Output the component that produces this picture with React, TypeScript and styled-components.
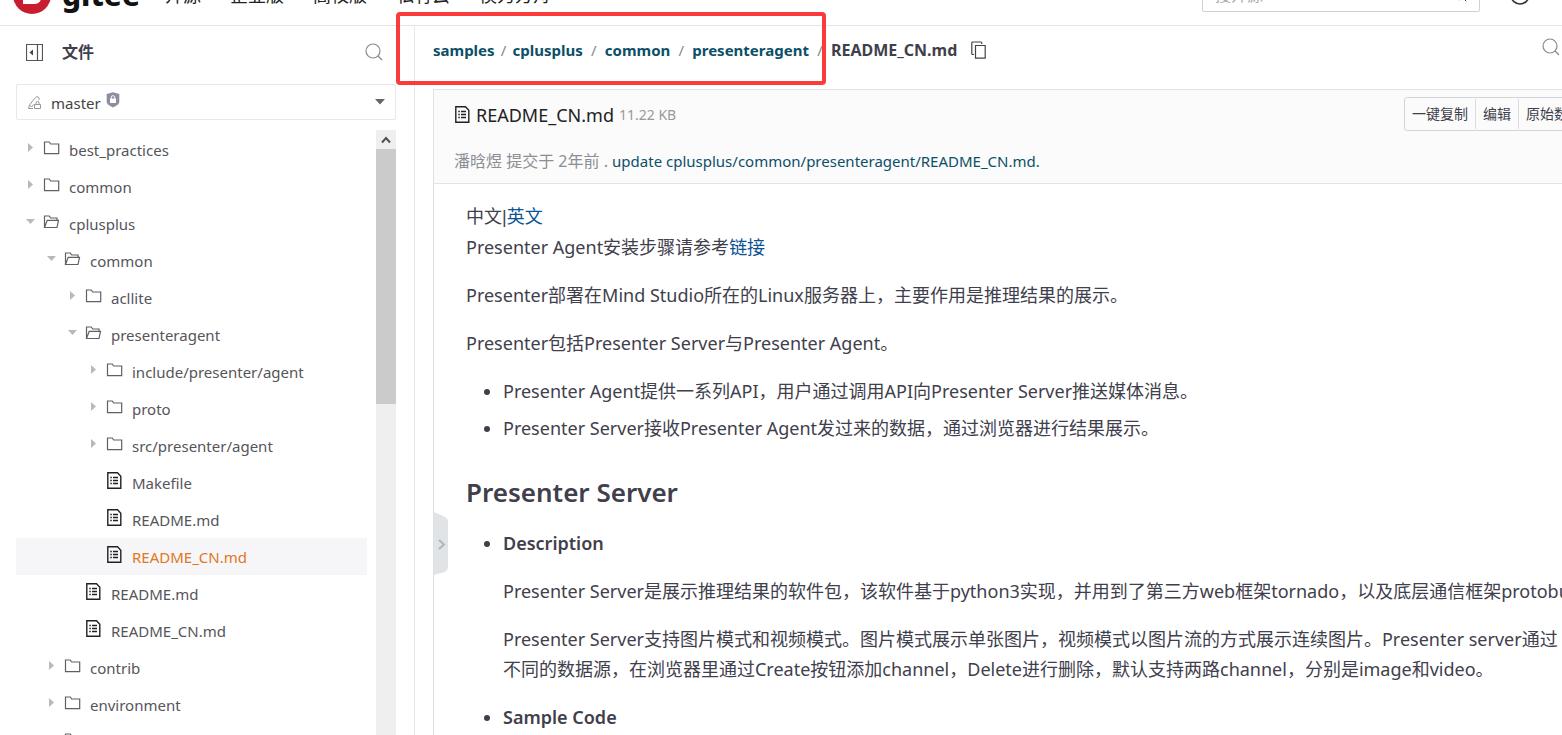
import React from 'react';
import styled, { createGlobalStyle, css } from 'styled-components';

const GlobalStyle = createGlobalStyle`
  *, *::before, *::after { box-sizing: border-box; }
  body {
    margin: 0;
    background: #fff;
    color: #40404c;
    font-family: 'Noto Sans', 'Noto Sans CJK SC', sans-serif;
    font-size: 16px;
    overflow: hidden;
  }
  a { color: inherit; text-decoration: none; }
  button, select, input { font: inherit; color: inherit; background: none; border: 0; padding: 0; margin: 0; }
  button { cursor: pointer; }
  svg { display: block; flex: none; }
`;

const Page = styled.div`
  position: relative;
  display: flex;
  flex-direction: column;
  height: 100vh;
  overflow: hidden;
`;

const TopBar = styled.header`
  display: flex;
  align-items: center;
  flex: none;
  height: 62px;
  margin-top: -36px;
  padding: 0 32px 0 12px;
  border-bottom: 1px solid #e3e3e5;
`;

const Brand = styled.a`
  display: flex;
  align-items: center;
  gap: 10px;
  width: 153px;
  color: #111;
  font-size: 30px;
  font-weight: 800;
  line-height: 40px;
`;

const Nav = styled.nav`
  display: flex;
  gap: 29px;
  color: #222;
  font-size: 18px;
  line-height: 26px;
  white-space: nowrap;
`;

const SearchField = styled.label`
  display: flex;
  align-items: center;
  width: 278px;
  height: 34px;
  margin-left: auto;
  padding: 0 12px;
  border: 1px solid #d0d0d4;
  border-radius: 2px;
  color: #333;
`;

const SearchInput = styled.input`
  flex: 1;
  min-width: 0;
  font-size: 16px;
  outline: 0;
  &::placeholder { color: #aaa; opacity: 1; }
`;

const HelpButton = styled.button`
  margin-left: 30px;
`;

const Columns = styled.div`
  display: flex;
  flex: 1;
  min-height: 0;
`;

const Sidebar = styled.aside`
  display: flex;
  flex-direction: column;
  flex: none;
  width: 415px;
  padding-left: 16px;
  border-right: 1px solid #e8e8ec;
`;

const SidebarHead = styled.div`
  display: flex;
  align-items: center;
  gap: 19px;
  height: 58px;
  padding: 0 31px 6px 10px;
`;

const SidebarTitle = styled.h2`
  flex: 1;
  margin: 0;
  font-size: 16px;
  line-height: 24px;
`;

const BranchBox = styled.div`
  display: flex;
  align-items: center;
  height: 36px;
  margin-right: 18px;
  padding: 0 10px;
  border: 1px solid #e8e8ea;
  border-radius: 2px;
  color: #444;
`;

const BranchSelect = styled.select`
  appearance: none;
  margin: 2px 5px 0 9px;
  font-size: 15px;
`;

const BranchBadge = styled.span`
  flex: 1;
  padding-bottom: 4px;
`;

const TreeArea = styled.div`
  display: flex;
  flex: 1;
  gap: 9px;
  min-height: 0;
  margin: 10px 18px 0 0;
`;

const Tree = styled.ul`
  flex: 1;
  margin: 0;
  padding: 1px 0 0;
  overflow: hidden;
  list-style: none;
`;

const rowStyles = css<{ $depth: number }>`
  display: flex;
  align-items: center;
  width: 100%;
  height: 37px;
  padding-left: ${({ $depth }) => 10 + $depth * 21}px;
  color: #55555a;
  font-size: 15px;
  line-height: 36px;
  text-align: left;
  svg { margin-bottom: 4px; }
`;

const FolderRow = styled.button<{ $depth: number }>`
  ${rowStyles}
`;

const FileRow = styled.a<{ $depth: number; $active?: boolean }>`
  ${rowStyles}
  ${({ $active }) => $active && css`
    background: #f6f6f9;
    color: #e2771c;
  `}
`;

const ArrowSlot = styled.span`
  display: flex;
  width: 17px;
`;

const RowLabel = styled.span`
  margin-left: 9px;
  white-space: nowrap;
`;

const ScrollTrack = styled.div`
  display: flex;
  flex-direction: column;
  width: 20px;
  background: #efefef;
`;

const ScrollUp = styled.button`
  display: flex;
  align-items: center;
  justify-content: center;
  height: 19px;
`;

const ScrollThumb = styled.div`
  height: 255px;
  background: #cbcbcb;
`;

const Main = styled.main`
  display: flex;
  flex-direction: column;
  flex: 1;
  min-width: 0;
  padding-left: 18px;
`;

const PathBar = styled.div`
  display: flex;
  align-items: center;
  flex: none;
  height: 63px;
  padding-bottom: 15px;
`;

const Crumbs = styled.nav`
  display: flex;
  margin-right: 14px;
  color: #888;
  font-size: 15px;
  line-height: 24px;
  white-space: nowrap;
`;

const Crumb = styled.a`
  color: #0b4f68;
  font-weight: 700;
`;

const CurrentCrumb = styled.span`
  color: #40404c;
  font-size: 16px;
  font-weight: 700;
`;

const Slash = styled.span<{ $tight: boolean }>`
  width: ${({ $tight }) => ($tight ? 18 : 22)}px;
  text-align: center;
`;

const PathSearch = styled.button`
  margin: 0 2px 6px auto;
`;

const FilePanel = styled.section`
  position: relative;
  flex: 1;
  min-height: 0;
  margin-right: -36px;
  border: solid #dfe1e5;
  border-width: 1px 0 0 1px;
`;

const FileHead = styled.div`
  height: 94px;
  padding: 7px 8px 0 20px;
  border-bottom: 1px solid #e3e3e5;
  background: #fbfbfb;
`;

const FileTitleRow = styled.div`
  display: flex;
  align-items: center;
  height: 34px;
`;

const FileName = styled.span`
  margin: 2px 5px 0;
  color: #222;
  font-size: 18px;
  line-height: 28px;
`;

const FileSize = styled.span`
  margin-top: 2px;
  color: #999;
  font-size: 14px;
  line-height: 24px;
`;

const Actions = styled.div`
  display: flex;
  align-items: center;
  height: 34px;
  margin-left: auto;
  border: 1px solid #d3d4da;
  border-radius: 3px;
`;

const Action = styled.button`
  height: 30px;
  padding: 0 7px;
  font-size: 14px;
  line-height: 28px;
  white-space: nowrap;
  & + & { border-left: 1px solid #dcdde2; }
`;

const CommitLine = styled.p`
  margin: 18px 0 0;
  color: #8d8d94;
  font-size: 16px;
  line-height: 24px;
  white-space: nowrap;
`;

const CommitLink = styled.a`
  color: #0b5069;
  font-size: 15px;
`;

const Article = styled.article`
  padding: 17px 0 0 32px;
  font-size: 18px;
  line-height: 30px;
  white-space: nowrap;
`;

const Paragraph = styled.p`
  margin: 0 0 18px;
`;

const Bar = styled.span`
  font-family: 'Liberation Sans', sans-serif;
`;

const BlueLink = styled.a`
  color: #0b5394;
`;

const Bullets = styled.ul<{ $gap: number }>`
  display: flex;
  flex-direction: column;
  gap: ${({ $gap }) => $gap}px;
  margin: 0;
  padding-left: 37px;
`;

const Heading = styled.h2`
  margin: 31px 0 18px;
  font-size: 26px;
  font-weight: 600;
  line-height: 36px;
`;

const Term = styled.p`
  margin: 0 0 18px;
  font-weight: 600;
`;

const PanelHandle = styled.button`
  position: absolute;
  top: 422px;
  left: 0;
`;

const Highlight = styled.div`
  position: absolute;
  top: 12px;
  left: 396px;
  width: 430px;
  height: 73px;
  border: 4px solid #fb3a3a;
  border-radius: 4px;
  pointer-events: none;
`;

const GiteeMark = () => (
  <svg width="40" height="40" viewBox="0 0 40 40" aria-hidden="true">
    <circle cx="20" cy="20" r="19" fill="#c71d2e" />
    <path d="M29 11H18a7 7 0 0 0-7 7v11h12a6 6 0 0 0 6-6v-5H18v4h6v1a2 2 0 0 1-2 2h-7v-7a3 3 0 0 1 3-3h11z" fill="#fff" />
  </svg>
);

const SearchIcon = ({ size = 18, color = '#8a8a8e' }: { size?: number; color?: string }) => (
  <svg width={size} height={size} viewBox="0 0 18 18" fill="none" stroke={color} strokeWidth="1.2" aria-hidden="true">
    <circle cx="8" cy="8" r="7" />
    <path d="M13 13l4 4" />
  </svg>
);

const HelpIcon = () => (
  <svg width="20" height="20" viewBox="0 0 20 20" fill="none" stroke="#333" strokeWidth="1.6" aria-hidden="true">
    <circle cx="10" cy="10" r="9" />
    <path d="M7.5 7.5a2.5 2.5 0 1 1 2.5 3v1.5" />
  </svg>
);

const CollapseIcon = () => (
  <svg width="17" height="17" viewBox="0 0 17 17" aria-hidden="true">
    <path d="M.5.5h16v16H.5zM11.5.5v16" fill="none" stroke="#555" strokeWidth="1.2" />
    <path d="M7 5.5v6l-3.500-3z" fill="#444" />
  </svg>
);

const BranchIcon = () => (
  <svg width="15" height="15" viewBox="0 0 15 15" fill="none" stroke="#98989c" aria-hidden="true">
    <path d="M6 13.500H1.500l1-3.500 6-7.500q1.500-1.500 2.800-.5t.7 2.500l-.5.800M2.500 10l2 2 2-2.500" />
    <path d="M7.500 9.500h6v4h-6zM9 9.500V8a1.500 1.500 0 0 1 3 0v1.500" />
  </svg>
);

const ShieldIcon = () => (
  <svg width="14" height="16" viewBox="0 0 14 16" aria-hidden="true">
    <path d="M7 .3l6.300 1.700v8q0 2.500-6.300 5.500-6.300-3-6.300-5.500V2z" fill="#8c8ea0" />
    <path d="M4 6.500h6v4.500H4z" fill="#fff" />
    <path d="M5.200 7V5.500a1.800 1.800 0 0 1 3.600 0V7" fill="none" stroke="#fff" />
  </svg>
);

const CaretIcon = () => (
  <svg width="10" height="6" viewBox="0 0 10 6" aria-hidden="true">
    <path d="M0 0h10L5 5.500z" fill="#666" />
  </svg>
);

const RowArrow = ({ open }: { open?: boolean }) => (
  <svg width="9" height="9" viewBox="0 0 9 9" aria-hidden="true">
    <path d={open ? 'M0 2h9L4.500 7z' : 'M2 0v9l5-4.500z'} fill="#b9b9bc" />
  </svg>
);

const FolderIcon = ({ open }: { open?: boolean }) => (
  <svg width="17" height="14" viewBox="0 0 17 14" fill="none" stroke="#606064" strokeWidth="1.200" aria-hidden="true">
    {open ? (
      <path d="M1.500 12.500V1h4.700l1.500 2h6.300v2M1.500 12.500L4.200 5.300h11.300l-1.500 7.200z" />
    ) : (
      <path d="M1.500 1h4.700l1.500 2h8v9.700H1.500z" />
    )}
  </svg>
);

const FileIcon = () => (
  <svg width="17" height="17" viewBox="0 0 17 17" fill="none" stroke="#222" strokeWidth="1.400" aria-hidden="true">
    <path d="M1.800.8h9.700l3.300 3.400v12H1.800z" />
    <path d="M4.300 5.500h1.500M7 5.500h5M4.300 8.500h1.500M7 8.500h5M4.300 11.500h1.500M7 11.500h5" />
  </svg>
);

const CopyIcon = () => (
  <svg width="15" height="18" viewBox="0 0 15 18" fill="none" stroke="#4a4040" strokeWidth="1.200" aria-hidden="true">
    <path d="M4.500 4.500h9.700v12.700H4.500z" />
    <path d="M3 13.500H1.800q-1 0-1-1v-10.500q0-1 1-1h8q1 0 1 1V3" />
  </svg>
);

const ChevronUp = () => (
  <svg width="10" height="8" viewBox="0 0 10 8" fill="none" stroke="#505050" strokeWidth="2" aria-hidden="true">
    <path d="M1 6.500l4-4.500 4 4.500" />
  </svg>
);

const HandleShape = () => (
  <svg width="14" height="64" viewBox="0 0 14 64" aria-hidden="true">
    <path d="M0 0l11 5q3 2 3 4v46q0 3-3 5L0 63z" fill="#e0e4e6" />
    <path d="M5 28l5 4.500-5 4.500" fill="none" stroke="#b0b4bc" strokeWidth="2" />
  </svg>
);

type Entry = { name: string; depth: number; kind: 'closed' | 'open' | 'file'; active?: boolean };

const entries: Entry[] = [
  { name: 'best_practices', depth: 0, kind: 'closed' },
  { name: 'common', depth: 0, kind: 'closed' },
  { name: 'cplusplus', depth: 0, kind: 'open' },
  { name: 'common', depth: 1, kind: 'open' },
  { name: 'acllite', depth: 2, kind: 'closed' },
  { name: 'presenteragent', depth: 2, kind: 'open' },
  { name: 'include/presenter/agent', depth: 3, kind: 'closed' },
  { name: 'proto', depth: 3, kind: 'closed' },
  { name: 'src/presenter/agent', depth: 3, kind: 'closed' },
  { name: 'Makefile', depth: 3, kind: 'file' },
  { name: 'README.md', depth: 3, kind: 'file' },
  { name: 'README_CN.md', depth: 3, kind: 'file', active: true },
  { name: 'README.md', depth: 2, kind: 'file' },
  { name: 'README_CN.md', depth: 2, kind: 'file' },
  { name: 'contrib', depth: 1, kind: 'closed' },
  { name: 'environment', depth: 1, kind: 'closed' },
  { name: 'level1_single_api', depth: 1, kind: 'closed' },
];

const navItems = ['开源', '企业版', '高校版', '私有云', '模力方舟'];
const crumbs = ['samples', 'cplusplus', 'common', 'presenteragent'];

const TreeEntry = ({ name, depth, kind, active }: Entry) => (
  <li>
    {kind === 'file' ? (
      <FileRow href="#" $depth={depth} $active={active}>
        <ArrowSlot />
        <FileIcon />
        <RowLabel>{name}</RowLabel>
      </FileRow>
    ) : (
      <FolderRow $depth={depth} aria-expanded={kind === 'open'}>
        <ArrowSlot><RowArrow open={kind === 'open'} /></ArrowSlot>
        <FolderIcon open={kind === 'open'} />
        <RowLabel>{name}</RowLabel>
      </FolderRow>
    )}
  </li>
);

export default function App() {
  return (
    <Page>
      <GlobalStyle />
      <TopBar>
        <Brand href="#"><GiteeMark />gitee</Brand>
        <Nav>{navItems.map((item) => <a href="#" key={item}>{item}</a>)}</Nav>
        <SearchField>
          <SearchInput placeholder="搜开源" aria-label="搜开源" />
          <SearchIcon size={14} color="#333" />
        </SearchField>
        <HelpButton aria-label="帮助"><HelpIcon /></HelpButton>
      </TopBar>
      <Columns>
        <Sidebar>
          <SidebarHead>
            <button aria-label="收起"><CollapseIcon /></button>
            <SidebarTitle>文件</SidebarTitle>
            <button aria-label="搜索文件"><SearchIcon /></button>
          </SidebarHead>
          <BranchBox>
            <BranchIcon />
            <BranchSelect aria-label="分支"><option>master</option></BranchSelect>
            <BranchBadge><ShieldIcon /></BranchBadge>
            <CaretIcon />
          </BranchBox>
          <TreeArea>
            <Tree>{entries.map((entry, i) => <TreeEntry key={i} {...entry} />)}</Tree>
            <ScrollTrack>
              <ScrollUp aria-label="向上滚动"><ChevronUp /></ScrollUp>
              <ScrollThumb />
            </ScrollTrack>
          </TreeArea>
        </Sidebar>
        <Main>
          <PathBar>
            <Crumbs>
              {crumbs.map((crumb, i) => (
                <React.Fragment key={crumb}>
                  <Crumb href="#">{crumb}</Crumb>
                  <Slash $tight={i === 0}>/</Slash>
                </React.Fragment>
              ))}
              <CurrentCrumb>README_CN.md</CurrentCrumb>
            </Crumbs>
            <button aria-label="复制路径"><CopyIcon /></button>
            <PathSearch aria-label="搜索"><SearchIcon /></PathSearch>
          </PathBar>
          <FilePanel>
            <FileHead>
              <FileTitleRow>
                <FileIcon />
                <FileName>README_CN.md</FileName>
                <FileSize>11.22 KB</FileSize>
                <Actions>
                  <Action>一键复制</Action>
                  <Action>编辑</Action>
                  <Action>原始数据</Action>
                </Actions>
              </FileTitleRow>
              <CommitLine>
                潘晗煜 提交于 2年前 . <CommitLink href="#">update cplusplus/common/presenteragent/README_CN.md.</CommitLink>
              </CommitLine>
            </FileHead>
            <Article>
              <Paragraph>
                中文<Bar>|</Bar><BlueLink href="#">英文</BlueLink><br />
                Presenter Agent安装步骤请参考<BlueLink href="#">链接</BlueLink>
              </Paragraph>
              <Paragraph>Presenter部署在Mind Studio所在的Linux服务器上，主要作用是推理结果的展示。</Paragraph>
              <Paragraph>Presenter包括Presenter Server与Presenter Agent。</Paragraph>
              <Bullets $gap={7}>
                <li>Presenter Agent提供一系列API，用户通过调用API向Presenter Server推送媒体消息。</li>
                <li>Presenter Server接收Presenter Agent发过来的数据，通过浏览器进行结果展示。</li>
              </Bullets>
              <Heading>Presenter Server</Heading>
              <Bullets $gap={0}>
                <li>
                  <Term>Description</Term>
                  <Paragraph>Presenter Server是展示推理结果的软件包，该软件基于python3实现，并用到了第三方web框架tornado，以及底层通信框架protobuf</Paragraph>
                  <Paragraph>
                    Presenter Server支持图片模式和视频模式。图片模式展示单张图片，视频模式以图片流的方式展示连续图片。Presenter server通过<br />
                    不同的数据源，在浏览器里通过Create按钮添加channel，Delete进行删除，默认支持两路channel，分别是image和video。
                  </Paragraph>
                </li>
                <li><Term>Sample Code</Term></li>
              </Bullets>
            </Article>
            <PanelHandle aria-label="展开"><HandleShape /></PanelHandle>
          </FilePanel>
        </Main>
      </Columns>
      <Highlight />
    </Page>
  );
}
